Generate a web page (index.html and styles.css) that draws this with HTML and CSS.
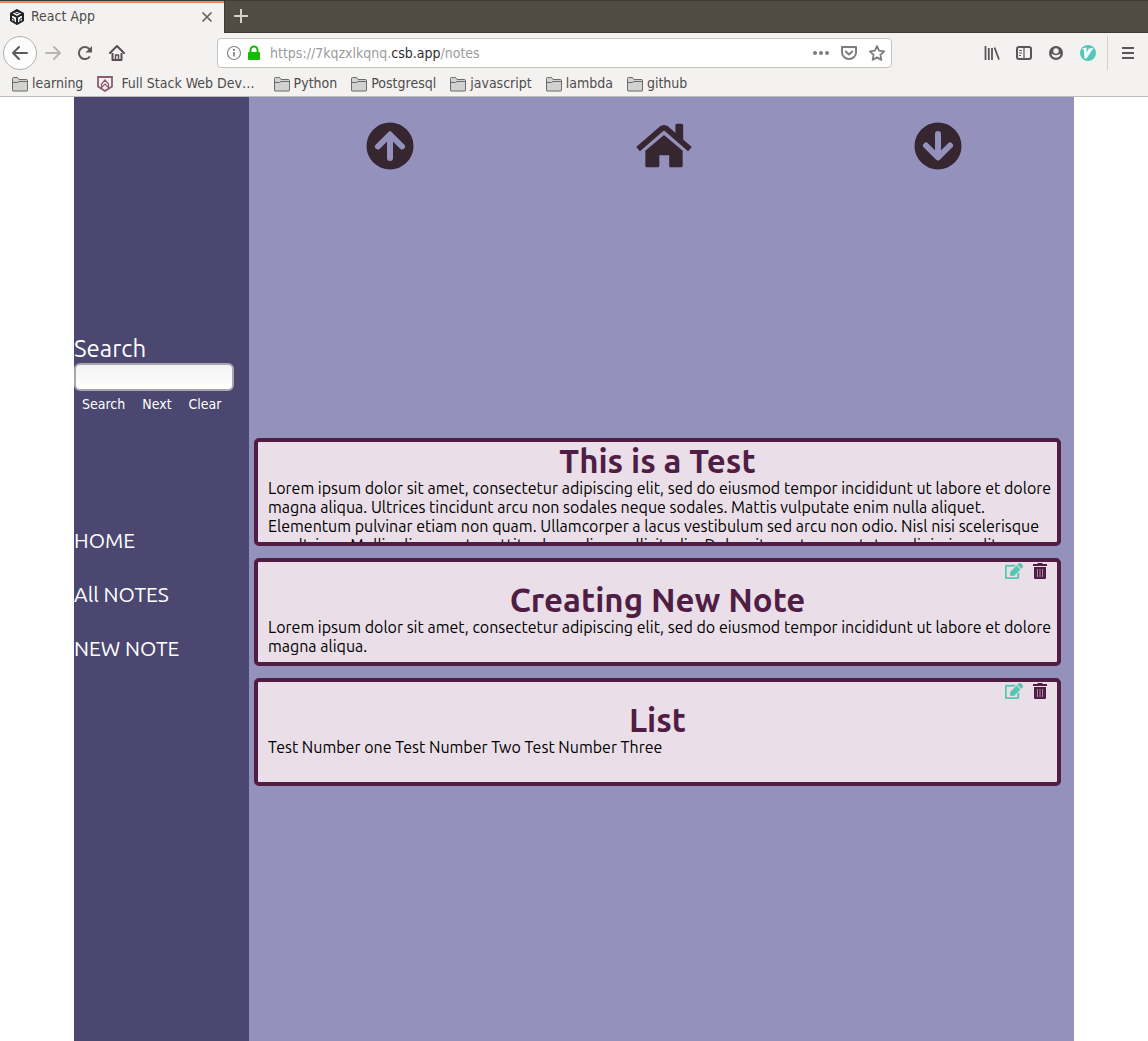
FILE: index.html
```html
<!DOCTYPE html>
<html lang="en">
<head>
<meta charset="utf-8">
<title>React App</title>
<link rel="stylesheet" href="styles.css">
</head>
<body>
<svg class="symbols" aria-hidden="true">
  <symbol id="folder" viewBox="0 0 16 16"><path d="M.5 14.500V2.500q0-1 1-1h4l1.500 2h7.500q1 0 1 1v10q0 .5-.5.500H1q-.5 0-.5-.5z" fill="#d2d2d0" stroke="#6a6a6a"/><path d="M1 6.500h4.500l1.500-1h8.500" fill="none" stroke="#6a6a6a"/></symbol>
  <symbol id="edit" viewBox="0 0 576 512"><path fill="currentColor" stroke="currentColor" stroke-width="14" d="M402.300 344.900l32-32c5-5 13.700-1.500 13.700 5.700V464c0 26.500-21.500 48-48 48H48c-26.500 0-48-21.500-48-48V112c0-26.500 21.500-48 48-48h273.500c7.100 0 10.700 8.600 5.700 13.700l-32 32c-1.500 1.500-3.500 2.300-5.700 2.300H48v352h352V350.500c0-2.100.8-4.100 2.300-5.600z"/><path fill="currentColor" d="M558.900 143.100l-42 42-126-126 42-42c22.900-22.900 59.900-22.900 82.700 0l43.200 43.200c22.900 22.900 22.900 60 .1 82.800zM372 78l126 126-201.700 201.700-90.400 10c-26.200 2.900-48.500-19.200-45.600-45.600l10-90.400z"/></symbol>
  <symbol id="trash" viewBox="0 0 14 16"><path fill="currentColor" d="M5 0h4l1 1h4v2H0V1h4zM1 4h12v11q0 1-1 1H2q-1 0-1-1z"/><path d="M4.500 6v8M7 6v8M9.500 6v8" stroke="#a48ba1"/></symbol>
</svg>

<header class="browser">
  <div class="tabs">
    <div class="tab">
      <svg class="i16" viewBox="0 0 16 16" fill="none" stroke="#202427" stroke-width="2"><path d="M8 1l6 3.500v7L8 15l-6-3.500v-7zM2.500 4.800L8 8l5.500-3.200M8 8v7"/><path d="M5 3l3 1.700L11 3M2 8.500l3 1.700v3M14 8.500l-3 1.700v3" stroke-width="1"/></svg>
      <span class="tab-title">React App</span>
      <button class="plain" aria-label="Close tab"><svg class="i16" viewBox="0 0 16 16" stroke="#5e5e5e" stroke-width="1.600"><path d="M3.500 3.500l9 9M12.500 3.500l-9 9"/></svg></button>
    </div>
    <button class="plain new-tab" aria-label="New tab"><svg class="i16" viewBox="0 0 16 16" stroke="#d5cfc5" stroke-width="2"><path d="M8 1v14M1 8h14"/></svg></button>
  </div>

  <div class="toolbar">
    <button class="plain back" aria-label="Back"><svg class="i16" viewBox="0 0 16 16" fill="none" stroke="#5b5b5b" stroke-width="2" stroke-linecap="round" stroke-linejoin="round"><path d="M15 8H1M7 2L1 8l6 6"/></svg></button>
    <button class="plain tool" aria-label="Forward"><svg class="i16" viewBox="0 0 16 16" fill="none" stroke="#b7b6b5" stroke-width="2" stroke-linecap="round" stroke-linejoin="round"><path d="M1 8h14M9 2l6 6-6 6"/></svg></button>
    <button class="plain tool" aria-label="Reload"><svg class="i16" viewBox="0 0 16 16" fill="none" stroke="#5b5b5b" stroke-width="2"><path d="M12.800 11.500A6 6 0 1 1 12.500 4.200"/><path d="M15 1v6.500H8.500z" fill="#5b5b5b" stroke="none"/></svg></button>
    <button class="plain tool" aria-label="Home"><svg class="i16" viewBox="0 0 16 16" fill="none" stroke="#5b4f54" stroke-width="2" stroke-linejoin="round"><path d="M1 8l7-7 7 7" stroke-linecap="round"/><path d="M3.500 8v7h9V8"/><path d="M6.500 15v-5h3v5" stroke-width="1.500"/></svg></button>
    <div class="address">
      <svg class="i16" viewBox="0 0 16 16" fill="none" stroke="#858585"><circle cx="8" cy="8" r="6.500" stroke-width="1.200"/><path d="M8 7v4.500M8 4v2" stroke-width="1.800"/></svg>
      <svg class="i16" viewBox="0 0 16 16"><path d="M4.500 7V5a3.500 3.500 0 0 1 7 0v2" fill="none" stroke="#12bc00" stroke-width="2"/><rect x="2" y="7" width="12" height="8" rx="1" fill="#12bc00"/></svg>
      <a class="url" href="#">https://7kqzxlkqnq.<b>csb.app</b>/notes</a>
      <div class="page-actions">
        <svg class="i16" viewBox="0 0 16 16" fill="#7d7d7d"><circle cx="2" cy="8" r="2"/><circle cx="8" cy="8" r="2"/><circle cx="14" cy="8" r="2"/></svg>
        <svg class="i16" viewBox="0 0 16 16" fill="none" stroke="#7d7d7d" stroke-width="2" stroke-linejoin="round"><path d="M1 2h14v5.500a7 6.500 0 0 1-14 0z"/><path d="M4.800 6.500L8 9.500l3.200-3" stroke-linecap="round"/></svg>
        <svg class="i16" viewBox="0 0 16 16" fill="none" stroke="#7d7d7d" stroke-width="1.800" stroke-linejoin="round"><path d="M8 1l2.100 4.700 5 .6-3.700 3.500 1 5.100L8 12.400l-4.400 2.500 1-5.100L.9 6.300l5-.6z"/></svg>
      </div>
    </div>
    <div class="tools">
      <svg class="i16" viewBox="0 0 16 16" fill="none" stroke="#5b5459" stroke-width="1.800"><path d="M1.500 1v14M4.800 3v12M8 3v12M10.500 2.500l4.500 12"/></svg>
      <svg class="i16" viewBox="0 0 16 16" fill="none" stroke="#5b5459"><rect x="1" y="2" width="14" height="12" rx="2" stroke-width="2"/><path d="M8 2v12M3 5.500h3M3 8h3M3 10.500h2" stroke-width="1.200"/></svg>
      <svg class="i16" viewBox="0 0 16 16"><circle cx="8" cy="8" r="7" fill="#5b5459"/><circle cx="8" cy="6" r="2.700" fill="#f4f2f1"/><path d="M3.500 8.500q4.500 3.500 9 0-.5 4.300-4.500 4.300T3.500 8.500z" fill="#f4f2f1"/></svg>
      <svg class="i16" viewBox="0 0 16 16"><circle cx="8" cy="8" r="8" fill="#54c8b8"/><path d="M2 3.500l4.500-1 .2 5 2-4 5-.8L6.500 13.500H4.300L4 5z" fill="#f4f8ff"/></svg>
    </div>
    <button class="plain menu" aria-label="Open menu"><svg class="i16" viewBox="0 0 16 16" stroke="#5b5459" stroke-width="2"><path d="M2 3h12M2 8h12M2 13h12"/></svg></button>
  </div>

  <nav class="bookmarks" aria-label="Bookmarks">
    <a href="#"><svg class="i16"><use href="#folder"/></svg>learning</a>
    <a href="#" class="wide"><svg class="i16" viewBox="0 0 16 16" fill="none" stroke="#8c5c6d" stroke-width="1.800"><path d="M1 1h14v9.500L8 15l-7-4.500z"/><path d="M4.500 11.500V8L8 4l3.500 4v3.500L8 8z" stroke-width="1.200"/></svg>Full Stack Web Dev…</a>
    <a href="#"><svg class="i16"><use href="#folder"/></svg>Python</a>
    <a href="#"><svg class="i16"><use href="#folder"/></svg>Postgresql</a>
    <a href="#"><svg class="i16"><use href="#folder"/></svg>javascript</a>
    <a href="#"><svg class="i16"><use href="#folder"/></svg>lambda</a>
    <a href="#"><svg class="i16"><use href="#folder"/></svg>github</a>
  </nav>
</header>

<div class="app">
  <aside class="sidebar">
    <form class="search">
      <label for="search">Search</label>
      <input id="search" type="text">
      <div class="search-buttons">
        <button type="button">Search</button>
        <button type="button">Next</button>
        <button type="button">Clear</button>
      </div>
    </form>
    <nav class="links">
      <a href="#">HOME</a>
      <a href="#">All NOTES</a>
      <a href="#">NEW NOTE</a>
    </nav>
  </aside>

  <main class="content">
    <nav class="sorters" aria-label="Note controls">
      <a href="#" aria-label="Sort up"><svg class="arrow" viewBox="0 0 48 48"><circle cx="24" cy="24" r="23.500" fill="#352630"/><path d="M24 36V13M12 24.500l12-12 12 12" fill="none" stroke="#9591bd" stroke-width="6" stroke-linecap="round" stroke-linejoin="round"/></svg></a>
      <a href="#" aria-label="Home"><svg class="house" viewBox="0 0 54 48"><path d="M2 26L24.500 6.500q2.500-2 5 0L52 26" fill="none" stroke="#352630" stroke-width="5.500"/><path d="M38 3q0-1.500 1.500-1.500H44q1.500 0 1.500 1.500v17L38 13zM27 12.500L45 27.500V42q0 1.500-1.500 1.500H33q-1 0-1-1.500V32H22.500v10q0 1.500-1.500 1.500H10.500Q9 43.500 9 42V27.500z" fill="#352630"/></svg></a>
      <a href="#" aria-label="Sort down"><svg class="arrow" viewBox="0 0 48 48"><circle cx="24" cy="24" r="23.500" fill="#352630"/><path d="M24 12v23M12 23.500l12 12 12-12" fill="none" stroke="#9591bd" stroke-width="6" stroke-linecap="round" stroke-linejoin="round"/></svg></a>
    </nav>

    <section class="notes">
      <article class="note">
        <h2>This is a Test</h2>
        <p>Lorem ipsum dolor sit amet, consectetur adipiscing elit, sed do eiusmod tempor incididunt ut labore et dolore magna aliqua. Ultrices tincidunt arcu non sodales neque sodales. Mattis vulputate enim nulla aliquet. Elementum pulvinar etiam non quam. Ullamcorper a lacus vestibulum sed arcu non odio. Nisl nisi scelerisque eu ultrices. Mollis aliquam ut porttitor leo a diam sollicitudin. Dolor sit amet consectetur adipiscing elit.</p>
      </article>
      <article class="note">
        <div class="actions">
          <button class="plain edit" aria-label="Edit note"><svg><use href="#edit"/></svg></button>
          <button class="plain trash" aria-label="Delete note"><svg><use href="#trash"/></svg></button>
        </div>
        <h2>Creating New Note</h2>
        <p>Lorem ipsum dolor sit amet, consectetur adipiscing elit, sed do eiusmod tempor incididunt ut labore et dolore magna aliqua.</p>
      </article>
      <article class="note">
        <div class="actions">
          <button class="plain edit" aria-label="Edit note"><svg><use href="#edit"/></svg></button>
          <button class="plain trash" aria-label="Delete note"><svg><use href="#trash"/></svg></button>
        </div>
        <h2>List</h2>
        <p>Test Number one Test Number Two Test Number Three</p>
      </article>
    </section>
  </main>
</div>
</body>
</html>
```
FILE: styles.css
```css
* { box-sizing: border-box; }

body {
  margin: 0;
  min-height: 100vh;
  display: flex;
  flex-direction: column;
  background: #fff;
  font-family: Ubuntu, "Noto Sans", sans-serif;
  font-size: 16px;
  line-height: 19px;
}

a { color: inherit; text-decoration: none; }
svg { display: block; flex: none; }
.symbols { position: absolute; width: 0; height: 0; }
.i16 { width: 16px; height: 16px; }

.plain {
  display: flex;
  align-items: center;
  justify-content: center;
  padding: 0;
  border: 0;
  background: none;
}

/* Browser chrome */
.browser {
  font-family: "DejaVu Sans Condensed", "DejaVu Sans", sans-serif;
  font-size: 14px;
  color: #4c4c4c;
  background: #f4f2f1;
  border-bottom: 1px solid #bdbab8;
}

.tabs {
  display: flex;
  height: 33px;
  background: #504c44;
  border-top: 1px solid #3c3936;
}

.tab {
  display: flex;
  align-items: center;
  gap: 6px;
  width: 224px;
  padding: 0 9px 3px;
  background: #f4f2f1;
  border-top: 2px solid #ef8559;
}

.tab-title { flex: 1; }

.new-tab {
  flex: 1;
  justify-content: flex-start;
  padding: 0 0 2px 8px;
  border-left: 1px solid #3c3936;
  border-bottom: 1px solid #3c3936;
}

.toolbar {
  display: flex;
  align-items: center;
  height: 40px;
  padding-left: 3px;
}

.back {
  width: 34px;
  height: 34px;
  border: 1px solid #b3b0ae;
  border-radius: 50%;
  background: #fcfcfc;
}

.tool { width: 32px; height: 32px; }

.address {
  flex: 1;
  display: flex;
  align-items: center;
  gap: 4px;
  height: 30px;
  margin: 0 92px 0 84px;
  padding: 0 6px 0 8px;
  background: #fff;
  border: 1px solid #c6c2be;
  border-radius: 4px;
}

.url { flex: 1; margin-left: 4px; color: #9b9b9b; }
.url b { font-weight: 400; color: #2e2e2e; }
.page-actions { display: flex; gap: 12px; }
.tools { display: flex; gap: 16px; }

.menu {
  width: 41px;
  height: 34px;
  margin-left: 11px;
  border-left: 1px solid #d3d0ce;
}

.bookmarks {
  display: flex;
  gap: 14px;
  height: 23px;
  padding-left: 12px;
}

.bookmarks a { display: flex; align-items: center; gap: 4px; height: 21px; }
.bookmarks .wide { gap: 8px; margin-right: 5px; }

/* Notes app */
.app {
  flex: 1;
  display: flex;
  width: 100%;
  max-width: 1000px;
  margin: 0 auto;
}

.sidebar {
  width: 175px;
  padding-top: 236px;
  background: #4b4771;
  color: #fff;
}

.search { display: flex; flex-direction: column; }
.search label { padding-top: 2px; font-size: 24px; line-height: 28px; }

.search input {
  width: 160px;
  height: 28px;
  margin: 0;
  border: 2px solid #aaa6ae;
  border-radius: 6px;
  background: linear-gradient(#f3f3f3, #fff);
}

.search-buttons { display: flex; gap: 1px; padding-top: 3px; }

.search-buttons button {
  padding: 0 8px;
  border: 0;
  background: none;
  color: #fff;
  font: 14px/20px "DejaVu Sans Condensed", "DejaVu Sans", sans-serif;
}

.links {
  display: flex;
  flex-direction: column;
  gap: 30px;
  padding-top: 114px;
  font-size: 21px;
  line-height: 24px;
}

.content {
  flex: 1;
  padding: 25px 13px 24px 5px;
  background: #9591bd;
}

.sorters {
  display: grid;
  grid-template-columns: repeat(3, 1fr);
  justify-items: center;
  margin: 0 -14px 0 -1px;
}

.arrow { width: 48px; height: 48px; }
.house { width: 56px; height: 50px; }

.notes { display: grid; gap: 12px; padding-top: 266px; }

.note {
  height: 108px;
  padding: 0 10px;
  overflow: hidden;
  background: #eadfe8;
  border: 4px solid #501e45;
  border-radius: 5px;
}

.note h2 {
  margin: 0;
  color: #501e45;
  font-size: 33px;
  line-height: 37px;
  text-align: center;
}

.note p { margin: 0 -6px 0 0; color: #000; }

.actions {
  display: flex;
  justify-content: flex-end;
  align-items: flex-start;
  gap: 10px;
  height: 19px;
  padding-top: 1px;
}

.edit { color: #54c8b1; }
.edit svg { width: 18px; height: 16px; }
.trash { color: #501e45; }
.trash svg { width: 14px; height: 16px; }
```
